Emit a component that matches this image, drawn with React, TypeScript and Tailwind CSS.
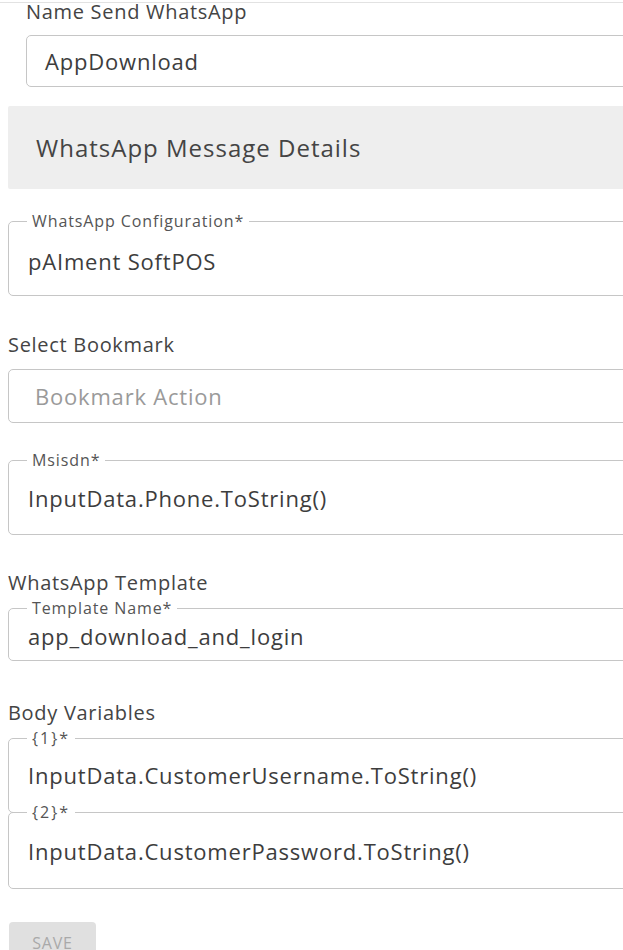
import React from "react";

const font = { fontFamily: '"Open Sans", "Noto Sans", sans-serif' };

function Field({
  legend,
  value,
  contentH,
  pb = 0,
  className = "",
  legendNum = false,
}: {
  legend: string;
  value: string;
  contentH: string;
  pb?: number;
  className?: string;
  legendNum?: boolean;
}) {
  return (
    <fieldset
      className={`relative border border-[#c6c6c6] rounded-[5px] px-[18px] m-0 min-w-0 ${className}`}
    >
      <legend
        className={`bg-white px-[5px] h-[16px] leading-[16px] text-[16px] text-[#555] ${
          legendNum ? "tracking-[2px]" : "tracking-[0.9px]"
        }`}
      >
        {legend}
      </legend>
      <div
        className={`${contentH} flex items-center pl-[1px] text-[22px] tracking-[0.8px] text-[#3d3d3d] whitespace-nowrap`}
        style={{ paddingBottom: pb }}
      >
        {value}
      </div>
    </fieldset>
  );
}

export default function App() {
  return (
    <div
      className="w-[623px] h-[950px] overflow-hidden bg-white"
      style={font}
    >
      <div className="w-[700px]">
        <div className="h-[2px]" />
        <div className="border-t border-[#e2e2e2]" />
        <div className="px-[8px]">
          <div className="ml-[18px] h-[32px] leading-[24px] -mt-[3px] mb-[3px] text-[20px] tracking-[0.7px] text-[#444]">
            Name Send WhatsApp
          </div>
          <div className="ml-[18px] h-[52px] border border-[#c6c6c6] rounded-[5px] pl-[18px] flex items-center text-[22px] tracking-[0.8px] text-[#3d3d3d]">
            AppDownload
          </div>
          <div className="mt-[19px] h-[83px] bg-[#eeeeee] rounded-[2px] pl-[28px] flex items-center text-[24px] tracking-[1px] text-[#444]">
            WhatsApp Message Details
          </div>

          <Field
            className="mt-[24px]"
            legend="WhatsApp Configuration*"
            value="pAIment SoftPOS"
            contentH="h-[66px]"
            pb={2}
          />

          <div className="mt-[37px] h-[24px] leading-[24px] text-[20px] tracking-[0.7px] text-[#444]">
            Select Bookmark
          </div>
          <div className="mt-[12px] h-[54px] border border-[#c6c6c6] rounded-[5px] pl-[26px] flex items-center text-[22px] tracking-[0.8px] text-[#9a9a9a]">
            Bookmark Action
          </div>

          <Field
            className="mt-[29px]"
            legend="Msisdn*"
            value="InputData.Phone.ToString()"
            contentH="h-[66px]"
            pb={6}
          />

          <div className="mt-[36px] h-[24px] leading-[24px] text-[20px] tracking-[0.7px] text-[#444]">
            WhatsApp Template
          </div>
          <Field
            className="mt-[5px]"
            legend="Template Name*"
            value="app_download_and_login"
            contentH="h-[44px]"
            pb={4}
          />

          <div className="mt-[40px] h-[24px] leading-[24px] text-[20px] tracking-[0.7px] text-[#444]">
            Body Variables
          </div>
          <Field
            className="mt-[5px]"
            legend="{1}*"
            value="InputData.CustomerUsername.ToString()"
            contentH="h-[66px]"
            pb={8}
            legendNum
          />
          <Field
            className="mt-[-9px]"
            legend="{2}*"
            value="InputData.CustomerPassword.ToString()"
            contentH="h-[68px]"
            pb={6}
            legendNum
          />

          <button className="mt-[33px] ml-[1px] w-[87px] h-[42px] bg-[#e0e0e0] rounded-[4px] text-[16px] font-medium tracking-[0.8px] text-[#a9a9a9] flex items-center justify-center">
            SAVE
          </button>
        </div>
      </div>
    </div>
  );
}
